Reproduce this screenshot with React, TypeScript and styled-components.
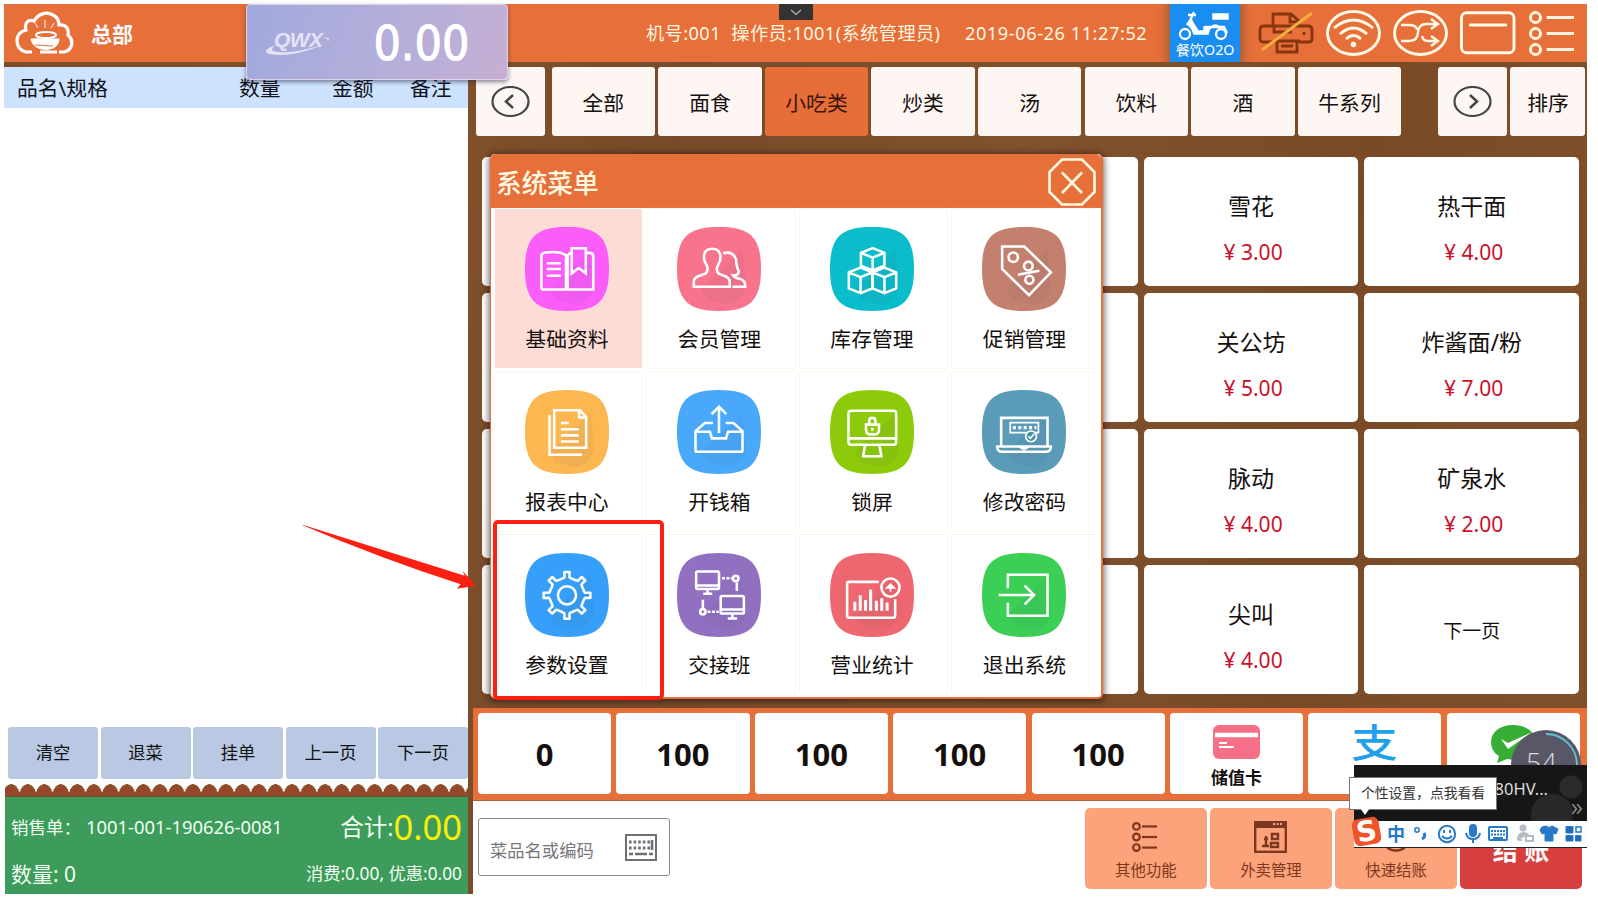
import React from 'react';
import styled, { createGlobalStyle } from 'styled-components';

const Global = createGlobalStyle`
  *, *::before, *::after { box-sizing: border-box; }
  body { margin: 0; background: #fff; overflow: hidden; }
  body, button, input { font-family: "Noto Sans", "Noto Sans CJK SC", sans-serif; }
  button { border: 0; padding: 0; background: none; color: inherit; }
`;

const Screen = styled.div`
  position: relative;
  width: 1598px;
  height: 903px;
  padding: 4px 0 0 4px;
  color: #15100e;
`;

const Pos = styled.div`
  display: flex;
  flex-direction: column;
  width: 1583px;
  height: 890px;
  background: linear-gradient(100deg, #7b4c29 0%, #835229 22%, #774b2a 40%, #80522d 60%, #7a4a27 80%, #80512b 100%);
`;

const Header = styled.header`
  display: flex;
  align-items: center;
  height: 58px;
  margin-bottom: 5px;
  background: #e76f3a;
  color: #fff8e0;
`;

const Brand = styled.div`
  display: flex;
  flex: none;
  align-items: center;
  gap: 17px;
  width: 642px;
  padding-left: 11px;
  font-size: 21px;
  font-weight: 700;
  color: #fff;
`;

const HeaderInfo = styled.div<{ $w: number; $track: number }>`
  flex: none;
  width: ${(p) => p.$w}px;
  font-size: 18.2px;
  line-height: 26px;
  letter-spacing: ${(p) => p.$track}px;
  white-space: pre;
`;

const Takeout = styled.div`
  display: flex;
  flex: none;
  flex-direction: column;
  align-items: center;
  width: 70px;
  height: 58px;
  margin: 0 18px 0 21px;
  padding-top: 6px;
  background: #1a8df2;
  box-shadow: 0 0 8px 4px #a9603a;
  clip-path: inset(0 -14px);
  color: #fff;
  font-size: 14.2px;
  line-height: 17px;
  white-space: nowrap;
`;

const HeaderIcons = styled.div`
  display: flex;
  flex: none;
  align-items: center;
  gap: 12px;
`;

const Body = styled.div`
  display: flex;
  flex: 1;
  min-height: 0;
`;

const Order = styled.section`
  display: flex;
  flex: none;
  flex-direction: column;
  width: 464px;
  background: #fff;
`;

const OrderHead = styled.div`
  display: grid;
  grid-template-columns: 222px 93px 78px 1fr;
  height: 41px;
  padding: 1px 0 0 13px;
  background: #cde2fc;
  font-size: 20.8px;
  line-height: 41px;
  color: #10131c;
`;

const OrderList = styled.div`
  flex: 1;
`;

const OrderActions = styled.div`
  display: flex;
  gap: 2.5px;
  height: 52px;
  margin: 0 0 4px 4px;
`;

const OrderAction = styled.button`
  flex: 1;
  padding-bottom: 4px;
  border-radius: 3px;
  background: #b9c9e3;
  font-size: 17.3px;
  color: #111;
`;

const Scallops = styled.div`
  height: 14px;
  margin-left: 1px;
  background: radial-gradient(ellipse 8.6px 12px at 50% 100%, #96472b 0 88%, #7c5a30 96%, transparent 100%) -2px 0 / 16.53px 13px repeat-x,
    linear-gradient(#7c4c2a, #7c4c2a) 0 100% / 100% 2px no-repeat;
`;

const Totals = styled.div`
  display: grid;
  grid-template-columns: auto auto;
  grid-template-rows: 58px 36px;
  align-items: center;
  height: 97px;
  margin-left: 1px;
  padding: 1px 6px 0 6px;
  background: #3d9b5b;
  color: #effff0;
  white-space: pre;
`;

const TotalText = styled.div<{ $size: number; $right?: boolean }>`
  display: flex;
  align-items: center;
  justify-content: ${(p) => (p.$right ? 'flex-end' : 'flex-start')};
  font-size: ${(p) => p.$size}px;
  line-height: 36px;
`;

const BillNo = styled.span`
  margin-left: 5px;
  font-size: 18.4px;
`;

const Amount = styled.b`
  font-size: 34.5px;
  font-weight: 400;
  color: #f8ee08;
`;

const Sales = styled.section`
  display: flex;
  flex-direction: column;
  flex: none;
  width: 1119px;
`;

const TabRow = styled.div`
  display: flex;
  height: 69px;
  margin-bottom: 21px;
  padding-left: 8.2px;
`;

const Tab = styled.button<{ $w?: number; $on?: boolean; $gap?: number }>`
  display: flex;
  align-items: center;
  justify-content: center;
  flex: none;
  width: ${(p) => p.$w ?? 103.3}px;
  margin-right: ${(p) => p.$gap ?? 3.3}px;
  border-radius: 3px;
  background: ${(p) => (p.$on ? '#e76e38' : '#fef6f3')};
  color: ${(p) => (p.$on ? '#3b1508' : '#15100e')};
  font-size: 20.8px;
`;

const Products = styled.div`
  display: grid;
  grid-template-columns: repeat(5, 214.6px);
  grid-auto-rows: 129px;
  gap: 7px 6px;
  margin: 0 0 14px 14px;
`;

const Product = styled.button`
  display: flex;
  flex-direction: column;
  align-items: center;
  justify-content: center;
  gap: 18px;
  padding-top: 15px;
  border-radius: 5px;
  background: #fff;
  font-size: 23px;
  line-height: 28px;
`;

const PageLabel = styled.span`
  margin-top: -12px;
  font-size: 19px;
`;

const Price = styled.span`
  padding-left: 4px;
  color: #cb1029;
  font-size: 21px;
`;

const PayBar = styled.div`
  display: flex;
  gap: 5.2px;
  height: 93px;
  margin-left: 5px;
  padding: 5px 0 6px 5px;
  background: #e76f3a;
  border-bottom: 1px solid #9b6545;
`;

const PayButton = styled.button`
  display: flex;
  flex-direction: column;
  align-items: center;
  justify-content: center;
  flex: none;
  width: 133.2px;
  border-radius: 4px;
  background: #fff;
  font-size: 31px;
  font-weight: 700;
`;

const PayMethod = styled(PayButton)`
  justify-content: flex-start;
  gap: 6px;
  padding-top: 12px;
  font-size: 17px;
  line-height: 24px;
`;

const AlipayMark = styled.span`
  height: 35px;
  font-size: 39px;
  font-weight: 500;
  line-height: 34px;
  transform: scaleX(1.2);
  color: #20a0e8;
`;

const Footer = styled.div`
  display: flex;
  flex: 1;
  gap: 3.6px;
  margin: 0 0 0 5px;
  padding: 7px 0 0 5px;
  background: #fff;
`;

const Search = styled.div`
  display: flex;
  flex: none;
  align-items: center;
  justify-content: space-between;
  width: 192px;
  height: 58px;
  margin: 10px 411.5px 0 0;
  padding: 4px 12px 0 11px;
  border: 1.5px solid #8a8b90;
  border-radius: 3px;
  font-size: 17.3px;
  color: #77777b;
  svg { margin-top: -4px; }
`;

const Action = styled.button<{ $primary?: boolean }>`
  display: flex;
  flex: none;
  flex-direction: column;
  align-items: center;
  width: 121.5px;
  height: 81px;
  padding-top: ${(p) => (p.$primary ? 25 : 13)}px;
  border-radius: 5px;
  background: ${(p) => (p.$primary ? '#d63f3e' : '#fda37b')};
  color: ${(p) => (p.$primary ? '#fff' : '#7d3720')};
  font-size: ${(p) => (p.$primary ? 25 : 15.4)}px;
  font-weight: ${(p) => (p.$primary ? 700 : 400)};
  line-height: 34px;
  white-space: pre;
  svg { flex: none; height: 32px; margin-bottom: 1px; }
`;

const Modal = styled.div`
  position: absolute;
  left: 490px;
  top: 154px;
  display: flex;
  flex-direction: column;
  width: 613px;
  height: 545px;
  border: solid #e76f3a;
  border-width: 0 2px 2px 1px;
  border-radius: 5px;
  background: #fff;
  box-shadow: 0 1px 7px 1px rgba(20, 10, 20, 0.65);
`;

const ModalHead = styled.div`
  display: flex;
  align-items: center;
  justify-content: space-between;
  height: 54px;
  padding: 2px 5px 0 5px;
  border-radius: 5px 5px 0 0;
  background: #e76f3a;
  color: #fff9e0;
  font-size: 25.7px;
  font-weight: 500;
`;

const MenuGrid = styled.div`
  display: grid;
  grid-template-columns: repeat(4, 147.5px);
  grid-template-rows: repeat(3, 159px);
  gap: 4px 5px;
  padding: 1px 0 0 3.7px;
`;

const MenuItem = styled.button<{ $on?: boolean }>`
  display: flex;
  flex-direction: column;
  align-items: center;
  padding: 18px 3px 0 0;
  background: ${(p) => (p.$on ? '#fedcd6' : '#fff')};
  box-shadow: ${(p) => (p.$on ? 'none' : '0 0 2px #ebe8d2')};
  font-size: 20.8px;
  line-height: 30px;
  svg { margin-bottom: 13px; }
`;

const Highlight = styled.div`
  position: absolute;
  left: 493px;
  top: 520px;
  width: 171px;
  height: 179.5px;
  border: 4px solid #fc2013;
  border-radius: 5px;
`;

const Arrow = styled.svg`
  position: absolute;
  left: 290px;
  top: 500px;
`;

const Scale = styled.div`
  position: absolute;
  left: 245.5px;
  top: 4px;
  display: flex;
  align-items: center;
  justify-content: space-between;
  width: 262px;
  height: 76px;
  padding: 1px 40px 0 18px;
  border: 1.5px solid #ddd4ec;
  border-radius: 4px;
  background: linear-gradient(110deg, #a1a9dd, #b2aeda 50%, #c6afd3);
  box-shadow: 0 2px 4px rgba(40, 40, 70, 0.55);
`;

const ScaleValue = styled.div`
  height: 50px;
  margin-right: -3px;
  font-family: "DejaVu Sans Condensed", "DejaVu Sans", sans-serif;
  font-stretch: condensed;
  font-size: 48px;
  line-height: 50px;
  color: #fff;
  -webkit-text-stroke: 1px #fff;
`;

const PullTab = styled.div`
  position: absolute;
  left: 779px;
  top: 4px;
  display: flex;
  align-items: center;
  justify-content: center;
  width: 34px;
  height: 16px;
  background: #333;
`;

const Gauge = styled.div`
  position: absolute;
  left: 1511px;
  top: 730px;
  width: 70px;
  height: 36px;
  padding: 15px 0 0 15px;
  border-radius: 35px 35px 0 0;
  background: #575767;
  overflow: hidden;
  color: #ddd;
  font-family: "Open Sans", sans-serif;
  font-size: 27px;
  font-weight: 300;
  line-height: 36px;
  svg { position: absolute; inset: 0; }
`;

const Device = styled.div`
  position: absolute;
  left: 1354px;
  top: 765px;
  display: flex;
  justify-content: flex-end;
  width: 233px;
  height: 57px;
  padding: 11px 3px 0 0;
  background: radial-gradient(circle at 217px 22px, #2a2a2c 0 11px, transparent 12px), radial-gradient(circle at 198px 50px, #29292b 0 20px, transparent 22px), #161616;
  color: #ddd;
  font-size: 16.5px;
  line-height: 26px;
`;

const More = styled.span`
  width: 13px;
  margin: 17px 0 0 23px;
  font-size: 26px;
  font-weight: 300;
  color: #999;
`;

const ImeBar = styled.div`
  position: absolute;
  left: 1354px;
  top: 821px;
  display: flex;
  align-items: center;
  gap: 7px;
  width: 233px;
  height: 27px;
  padding-left: 33px;
  border-bottom: 1.5px solid #222;
  background: #fbfdff;
  color: #2879c8;
`;

const ImeLang = styled.b`
  width: 20px;
  font-size: 18px;
  line-height: 24px;
`;

const ImeLogo = styled.div`
  position: absolute;
  left: 1353px;
  top: 818px;
  width: 27px;
  height: 27px;
  border-radius: 6px;
  transform: rotate(-10deg);
  background: #ee5427;
  color: #fff;
  font-family: "DejaVu Sans", sans-serif;
  font-size: 28px;
  font-weight: 700;
  line-height: 27px;
  text-align: center;
`;

const Tip = styled.div`
  position: absolute;
  left: 1349px;
  top: 777px;
  width: 148px;
  height: 33px;
  border: 1px solid #777;
  background: #fff;
  color: #333;
  font-size: 13.8px;
  line-height: 29px;
  text-align: center;
  &::after {
    content: '';
    position: absolute;
    left: 10px;
    top: 30px;
    border: solid transparent;
    border-top-color: #fff;
    border-width: 7px 5px 0;
  }
`;

const gearPath = (() => {
  const pts: string[] = [];
  for (let i = 0; i < 8; i++) {
    const base = (i * Math.PI) / 4 - Math.PI / 2;
    [[-0.25, 52], [-0.14, 54], [-0.11, 70], [0.11, 70], [0.14, 54], [0.25, 52]].forEach(([a, r]) => {
      pts.push(`${(125 + r * Math.cos(base + a)).toFixed(1)} ${(126 + r * Math.sin(base + a)).toFixed(1)}`);
    });
  }
  return `M${pts.join('L')}Z`;
})();

const cube = (x: number, y: number, h: number) =>
  `M${x} ${y}L${x + 35} ${y + 14}V${y + 14 + h}L${x} ${y + 28 + h}L${x - 35} ${y + 14 + h}V${y + 14}ZM${x - 35} ${y + 14}L${x} ${y + 28}L${x + 35} ${y + 14}M${x} ${y + 28}V${y + 28 + h}`;

type Entry = { label: string; color: string; art: React.ReactNode };

const entries: Entry[] = [
  {
    label: '基础资料', color: '#fb5dfa',
    art: <path d="M49 186V84Q50 77 62 76Q100 70 122 84V182M127 182V84Q132 78 138 77M182 77H194Q203 78 203 87V186H49M139 63H181V138L160 122L139 138ZM65 108H107M65 125H107M65 145H107" />,
  },
  {
    label: '会员管理', color: '#f8748c',
    art: <path d="M50 178H157V162Q155 151 142 146L123 138Q114 127 123 112Q131 100 129 83Q125 65 105 65Q84 65 81 83Q78 100 88 113Q95 127 86 138L65 146Q50 152 50 162ZM137 78Q168 70 176 98Q177 120 184 132Q182 146 167 144Q172 151 190 155Q204 160 203 178H165" />,
  },
  { label: '库存管理', color: '#0bbcca', art: <path d={cube(127, 63, 38) + cube(91, 121, 48) + cube(162, 121, 48)} /> },
  {
    label: '促销管理', color: '#c4806f',
    art: <><path d="M60 58H126L205 135L140 203L60 125ZM107 142L171 130" /><circle cx="93" cy="90" r="14" /><circle cx="138" cy="116" r="13" /><circle cx="141" cy="157" r="12" /></>,
  },
  {
    label: '报表中心', color: '#fcb751',
    art: <path d="M87 60H163L182 80V172H87ZM161 61V82H181M73 75V193H170M107 98H130M107 117H160M107 135H160M107 153H160" />,
  },
  {
    label: '开钱箱', color: '#49a8fa',
    art: <path d="M107 98H83L55 122V180Q55 184 60 184H190Q195 184 195 180V122L168 98H145M55 124H98L104 144H146L152 124H195M125 128V52M103 72L125 50L147 72" />,
  },
  {
    label: '锁屏', color: '#8dcb0a',
    art: <><rect x="55" y="62" width="142" height="101" rx="8" /><path d="M55 144H197M104 165L99 197H153L147 165M117 103V91Q117 83 126 83Q135 83 135 91V103M107 103H146V117Q145 132 134 132H119Q108 132 107 117ZM126 112V121" /></>,
  },
  {
    label: '修改密码', color: '#5b9bba',
    art: <><path d="M57 165V83H195V165M45 168H205Q205 184 190 184H60Q45 184 45 168ZM110 168L125 176L140 168" /><path d="M84 97H168V127H84Z" strokeWidth="5" /><path d="M92 112H162" strokeWidth="10" strokeDasharray="9 7" /><circle cx="146" cy="138" r="16" fill="#4790aa" strokeWidth="5" /><path d="M138 138L144 144L155 131" strokeWidth="5" /></>,
  },
  { label: '参数设置', color: '#369ffa', art: <><path d={gearPath} strokeLinejoin="round" /><circle cx="125" cy="126" r="27" /></> },
  {
    label: '交接班', color: '#9170c2',
    art: <><rect x="57" y="55" width="68" height="52" rx="4" /><rect x="130" y="128" width="69" height="52" rx="4" /><path d="M58 97H124M131 168H198M91 107V120M78 121H105M165 180V193M151 195H179M178 88V113M77 139V164" /><path d="M134 75H166M91 175H124" strokeDasharray="9 4" /><circle cx="175" cy="76" r="8" /><circle cx="77" cy="175" r="8" /></>,
  },
  {
    label: '营业统计', color: '#ee666f',
    art: <><path d="M145 86H57Q51 86 51 92V187Q51 193 57 193H188Q194 193 194 187V138" /><path d="M74 172V145M90 172V126M106 172V140M121 172V109M138 172V142M154 172V135M170 172V147" strokeWidth="9" /><circle cx="180" cy="103" r="27" /><path d="M180 115V96M169 104L180 93L191 104Z" fill="#fff" strokeWidth="5" /></>,
  },
  { label: '退出系统', color: '#3bd055', art: <path d="M77 105V65H195V187H77V148M50 125H152M127 97L155 125L127 153" /> },
];

const MenuIcon = ({ color, children }: { color: string; children: React.ReactNode }) => (
  <svg width="84" height="84" viewBox="0 0 250 250" fill="none">
    <path d="M125 0C220 0 250 32 250 125S218 250 125 250S0 218 0 125S30 0 125 0Z" fill={color} />
    <path d="M72 185L195 68L205 180Q190 225 150 230L90 215Z" fill="#3b4a50" opacity=".06" />
    <g stroke="#fff" strokeWidth="7.6">{children}</g>
  </svg>
);

const CloudLogo = () => (
  <svg width="59" height="44" viewBox="0 0 59 44" fill="none" stroke="#fff" strokeWidth="3.2">
    <path d="M17 41H11C4 39 2 35 2 30C2 24 6 20 11 19C9 12 13 8 19 10C23 3 31 0 38 4C42 6 44 10 44 14C52 13 54 19 53 24C59 29 58 39 49 41H44" />
    <path d="M16 28C18 42 44 42 44 28Z" fill="#fff" strokeWidth="1" />
    <ellipse cx="31" cy="24" rx="10" ry="3" strokeWidth="2" />
    <path d="M19 29L41 31M25 41H42" strokeWidth="3" />
    <path d="M23 17L20 12M30 17V9M36 17L39 12" strokeWidth="1" />
    <path d="M20 34L38 35" stroke="#e76f3a" strokeWidth="1.2" />
  </svg>
);

const Scooter = () => (
  <svg width="54" height="31" viewBox="0 0 54 31" fill="none" stroke="#fff" strokeWidth="2.3">
    <circle cx="7" cy="24" r="5" /><circle cx="43" cy="24" r="5" />
    <path d="M16 2L11 13M10 5H18" />
    <path d="M13 9L9 14Q14 17 16 24H30Q32 15 38 15L42 17H26V21H20L15 13Z" fill="#fff" strokeWidth="1.5" />
    <rect x="35" y="4" width="15" height="5" fill="#fff" strokeWidth="1.5" />
    <path d="M27 17H46L49 23" />
  </svg>
);

const Printer = () => (
  <svg width="56" height="46" viewBox="0 0 56 46" fill="none" stroke="#87350f" strokeWidth="2.8">
    <path d="M15 32H5Q2 32 2 29V20Q2 16 6 16H50Q54 16 54 20V29Q54 32 51 32H41M15 16V4H33L41 11V16M16 16V22H34M32 5V12H40M16 31H42M19 31V42H39V31M23 36H35M46 22V25" />
    <path d="M4 40L54 3" stroke="#f7ad3e" strokeWidth="3" />
  </svg>
);

const Wifi = () => (
  <svg width="55" height="46" viewBox="0 0 55 46" fill="none" stroke="#fffbe8" strokeWidth="2.9">
    <ellipse cx="27.5" cy="23" rx="26" ry="21.5" />
    <path d="M8 18Q27.5 2 47 18M14 24Q27.5 12 41 24M20 29Q27.5 22 35 29" />
    <circle cx="27.5" cy="34.500" r="2.400" fill="#fffbe8" strokeWidth="1" />
  </svg>
);

const Shuffle = () => (
  <svg width="55" height="46" viewBox="0 0 55 46" fill="none" stroke="#fffbe8" strokeWidth="2.9">
    <ellipse cx="27.5" cy="23" rx="26" ry="21.5" />
    <path d="M8 15H16Q24 15 24 20M8 31H16Q25 31 25 22Q26 14 33 14H44M38 9L45 14L38 19M29 26Q30 31 35 31H44M38 26L45 31L38 36" strokeWidth="2.3" />
  </svg>
);

const WindowIcon = () => (
  <svg width="56" height="44" viewBox="0 0 56 44" fill="none" stroke="#fffbe8" strokeWidth="2.9">
    <rect x="1.5" y="1.8" width="52.5" height="40" rx="5" /><path d="M9 14H47" />
  </svg>
);

const ListIcon = ({ w, h, color, sw }: { w: number; h: number; color: string; sw: number }) => (
  <svg width={w} height={h} viewBox={`0 0 ${w} ${h}`} fill="none" stroke={color} strokeWidth={sw}>
    {[0, 1, 2].map((i) => {
      const r = h / 9;
      const y = r + sw / 2 + (i * (h - 2 * r - sw)) / 2;
      return <g key={i}><circle cx={r + sw / 2 + 1} cy={y} r={r} /><path d={`M${w * 0.38} ${y}H${w - 3}`} /></g>;
    })}
  </svg>
);

const Chevron = ({ right }: { right?: boolean }) => (
  <svg width="39" height="32" viewBox="0 0 39 32" fill="none" stroke="#444" strokeWidth="2.2">
    <ellipse cx="19.5" cy="15.5" rx="18" ry="14.500" />
    <path d={right ? 'M17 9L24 15.5L17 22' : 'M22 9L15 15.5L22 22'} strokeWidth="2.5" />
  </svg>
);

const CardIcon = () => (
  <svg width="47" height="35" viewBox="0 0 47 35">
    <rect width="47" height="34" rx="6" fill="#f66f87" />
    <path d="M6 18H14M6 22H21" stroke="#fff" strokeWidth="2" /><path d="M2 10H45" stroke="#fff" strokeWidth="4.5" />
  </svg>
);

const WechatPay = () => (
  <svg width="46" height="44" viewBox="0 0 46 44">
    <path d="M23 0C10 0 1 7 1 17C1 23 4 28 9 31L7 38L17 34C34 37 46 29 46 17C46 7 36 0 23 0Z" fill="#37ad35" />
    <path d="M11 14L18 18L42 7L18 24Z" fill="#fff" />
  </svg>
);

const Keyboard = ({ w, h, color, sw }: { w: number; h: number; color: string; sw: number }) => (
  <svg width={w} height={h} viewBox="0 0 32 27" preserveAspectRatio="none" fill="none" stroke={color}>
    <rect x="1" y="1" width="30" height="25" strokeWidth={sw} />
    <path d="M4 8H26M4 14H26" strokeWidth="3" strokeDasharray="2.6 2" /><path d="M4 20H8M10 20H22M24 20H28M27 6V16" strokeWidth="2.6" />
  </svg>
);

const Takeaway = () => (
  <svg width="33" height="32" viewBox="0 0 33 32" fill="none" stroke="#7d3720" strokeWidth="2.4">
    <rect x="1.2" y="1.2" width="30.6" height="29.6" /><path d="M1 4H32" strokeWidth="6" />
    <path d="M19 3H29" stroke="#fda37b" strokeWidth="2" strokeDasharray="2 1.5" />
    <path d="M12 15V24M10 18H14M8 25H15M18 13H24V18H18ZM17 22H24V26H17Z" />
  </svg>
);

const QuickPay = () => (
  <svg width="30" height="32" viewBox="0 0 30 32" fill="none" stroke="#7d3720" strokeWidth="2.4">
    <circle cx="15" cy="16" r="13.500" /><path d="M9 9L15 16L21 9M15 16V25M9 18H21" />
  </svg>
);

const ImeIcons = () => (
  <svg width="172" height="22" viewBox="0 0 172 22" fill="none" stroke="#2879c8" strokeWidth="2">
    <circle cx="3" cy="7" r="2.2" strokeWidth="1.5" /><path d="M10 10Q12 14 8 16" strokeWidth="3" />
    <circle cx="33" cy="11" r="8.2" /><path d="M30 7V10M36 7V10M28 13Q33 18 38 13" />
    <rect x="56" y="2" width="6" height="11" rx="3" fill="#2879c8" /><path d="M52 10Q53 16 59 16T66 10M59 16V20" />
    <rect x="75" y="4" width="18" height="13" rx="1" /><path d="M77 8H91M77 11.5H91" strokeDasharray="2 1" /><path d="M79 15H89" />
    <g stroke="#b7bcc4" fill="#b7bcc4"><circle cx="109" cy="5" r="2.5" /><path d="M104 17Q104 10 110 10Q113 10 114 12M104 17H108" /><rect x="112" y="13" width="7" height="5" fill="#fff" /></g>
    <path d="M128 4L132 3Q135 6 138 3L144 6L142 11L139 10V18H131V10L128 11L126 7Z" fill="#2879c8" strokeWidth="1" />
    <path d="M152 3.5H159V10H152ZM152 12.5H159V18H152ZM161.500 12.500H167V18H161.500Z" fill="#2468b8" strokeWidth="1" /><path d="M162 4H167V9H162Z" strokeWidth="1.5" />
  </svg>
);

const categories = ['全部', '面食', '小吃类', '炒类', '汤', '饮料', '酒', '牛系列'];
const hidden = [null, null, null];
const products: (null | [string, string?])[] = [
  ...hidden, ['雪花', '3.00'], ['热干面', '4.00'],
  ...hidden, ['关公坊', '5.00'], ['炸酱面/粉', '7.00'],
  ...hidden, ['脉动', '4.00'], ['矿泉水', '2.00'],
  ...hidden, ['尖叫', '4.00'], ['下一页'],
];

export default function App() {
  return (
    <Screen>
      <Global />
      <Pos>
        <Header>
          <Brand><CloudLogo />总部</Brand>
          <HeaderInfo $w={319} $track={0.42}>{'机号:001  操作员:1001(系统管理员)'}</HeaderInfo>
          <HeaderInfo $w={184} $track={0.55}>2019-06-26 11:27:52</HeaderInfo>
          <Takeout><Scooter />餐饮O2O</Takeout>
          <HeaderIcons>
            <Printer /><Wifi /><Shuffle /><WindowIcon />
            <ListIcon w={49} h={45} color="#fff2dc" sw={3} />
          </HeaderIcons>
        </Header>
        <Body>
          <Order>
            <OrderHead><span>品名\规格</span><span>数量</span><span>金额</span><span>备注</span></OrderHead>
            <OrderList />
            <OrderActions>
              {['清空', '退菜', '挂单', '上一页', '下一页'].map((t) => <OrderAction key={t}>{t}</OrderAction>)}
            </OrderActions>
            <Scallops />
            <Totals>
              <TotalText $size={17.5}>销售单：<BillNo>1001-001-190626-0081</BillNo></TotalText>
              <TotalText $size={23.5} $right>合计:<Amount>0.00</Amount></TotalText>
              <TotalText $size={21}>数量: 0</TotalText>
              <TotalText $size={17.3} $right>消费:0.00, 优惠:0.00</TotalText>
            </Totals>
          </Order>
          <Sales>
            <TabRow>
              <Tab $w={69} $gap={6.5}><Chevron /></Tab>
              {categories.map((c) => <Tab key={c} $on={c === '小吃类'} $gap={c === '牛系列' ? 37 : undefined}>{c}</Tab>)}
              <Tab $w={69}><Chevron right /></Tab>
              <Tab $w={75} $gap={0}>排序</Tab>
            </TabRow>
            <Products>
              {products.map((p, i) => (
                <Product key={i}>
                  {p && (p[1] ? <><span>{p[0]}</span><Price>¥ {p[1]}</Price></> : <PageLabel>{p[0]}</PageLabel>)}
                </Product>
              ))}
            </Products>
            <PayBar>
              {[0, 100, 100, 100, 100].map((n, i) => <PayButton key={i}>{n}</PayButton>)}
              <PayMethod><CardIcon />储值卡</PayMethod>
              <PayMethod><AlipayMark>支</AlipayMark></PayMethod>
              <PayMethod><WechatPay /></PayMethod>
            </PayBar>
            <Footer>
              <Search>菜品名或编码<Keyboard w={32} h={27} color="#6f7075" sw={2} /></Search>
              <Action><ListIcon w={29} h={30} color="#7d3720" sw={2.2} />其他功能</Action>
              <Action><Takeaway />外卖管理</Action>
              <Action><QuickPay />快速结账</Action>
              <Action $primary>结 账</Action>
            </Footer>
          </Sales>
        </Body>
      </Pos>

      <Modal>
        <ModalHead>
          系统菜单
          <svg width="48" height="48" viewBox="0 0 48 48" fill="none" stroke="#fffbe0" strokeWidth="2.6">
            <path d="M14 1.500H34L46.500 14V34L34 46.500H14L1.500 34V14ZM14 14.500L34 35M34 14.500L14 35" />
          </svg>
        </ModalHead>
        <MenuGrid>
          {entries.map((e, i) => (
            <MenuItem key={e.label} $on={i === 0}><MenuIcon color={e.color}>{e.art}</MenuIcon>{e.label}</MenuItem>
          ))}
        </MenuGrid>
      </Modal>
      <Highlight />
      <Arrow width="190" height="100" viewBox="0 0 570 300">
        <path d="M38 74L524 227L518 213L558 257L501 266L512 253Q270 175 38 76Z" fill="#fc2013" />
      </Arrow>

      <Scale>
        <svg width="68" height="30" viewBox="0 0 68 30">
          <text x="9" y="19" fontFamily="Liberation Sans" fontSize="21" fontWeight="700" fontStyle="italic" fill="#e4e3f6" textLength="49">QWX</text>
          <path d="M11 17Q-5 23 4 26Q25 30 55 18Q72 10 57 9Q72 13 50 19Q22 27 8 23Q5 21 11 17Z" fill="#e4e3f6" />
        </svg>
        <ScaleValue>0.00</ScaleValue>
      </Scale>
      <PullTab>
        <svg width="12" height="7" viewBox="0 0 12 7" fill="none" stroke="#bbb" strokeWidth="1.2"><path d="M1 1L6 5.500L11 1" /></svg>
      </PullTab>

      <Gauge>
        54
        <svg width="70" height="36" viewBox="0 0 70 36" fill="none"><path d="M35 4A31 31 0 0 1 66 35" stroke="#63c4cf" strokeWidth="1.8" /></svg>
      </Gauge>
      <Device>80HV...<More>»</More></Device>
      <ImeBar><ImeLang>中</ImeLang><ImeIcons /></ImeBar>
      <Tip>个性设置，点我看看</Tip>
      <ImeLogo>S</ImeLogo>
    </Screen>
  );
}
